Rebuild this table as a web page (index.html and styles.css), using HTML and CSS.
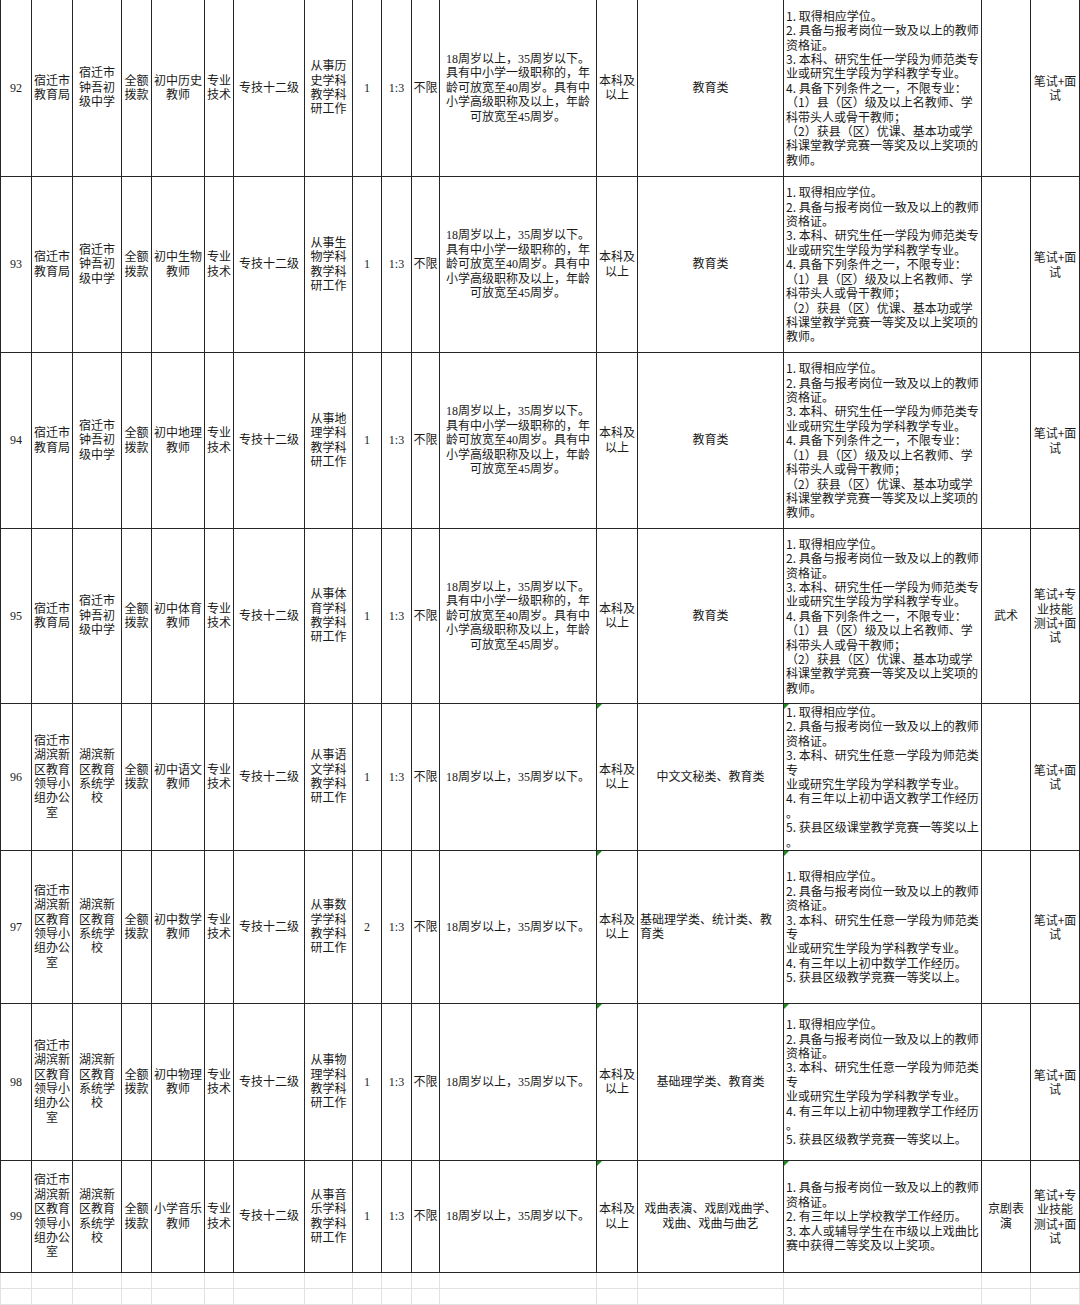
FILE: index.html
```html
<!DOCTYPE html>
<html lang="zh-CN">
<head>
<meta charset="utf-8">
<title>岗位表</title>
<link rel="stylesheet" href="styles.css">
</head>
<body>
<div class="sheet">

  <div class="row r92">
    <div class="c">92</div>
    <div class="c">宿迁市<br>教育局</div>
    <div class="c">宿迁市<br>钟吾初<br>级中学</div>
    <div class="c">全额<br>拨款</div>
    <div class="c">初中历史<br>教师</div>
    <div class="c">专业<br>技术</div>
    <div class="c">专技十二级</div>
    <div class="c">从事历<br>史学科<br>教学科<br>研工作</div>
    <div class="c">1</div>
    <div class="c">1:3</div>
    <div class="c">不限</div>
    <div class="c">18周岁以上，35周岁以下。<br>具有中小学一级职称的，年<br>龄可放宽至40周岁。具有中<br>小学高级职称及以上，年龄<br>可放宽至45周岁。</div>
    <div class="c">本科及<br>以上</div>
    <div class="c">教育类</div>
    <div class="c l sans">1. 取得相应学位。<br>2. 具备与报考岗位一致及以上的教师<br>资格证。<br>3. 本科、研究生任一学段为师范类专<br>业或研究生学段为学科教学专业。<br>4. 具备下列条件之一，不限专业：<br>（1）县（区）级及以上名教师、学<br>科带头人或骨干教师；<br>（2）获县（区）优课、基本功或学<br>科课堂教学竞赛一等奖及以上奖项的<br>教师。</div>
    <div class="c"></div>
    <div class="c sans">笔试+面<br>试</div>
  </div>

  <div class="row r93">
    <div class="c">93</div>
    <div class="c">宿迁市<br>教育局</div>
    <div class="c">宿迁市<br>钟吾初<br>级中学</div>
    <div class="c">全额<br>拨款</div>
    <div class="c">初中生物<br>教师</div>
    <div class="c">专业<br>技术</div>
    <div class="c">专技十二级</div>
    <div class="c">从事生<br>物学科<br>教学科<br>研工作</div>
    <div class="c">1</div>
    <div class="c">1:3</div>
    <div class="c">不限</div>
    <div class="c">18周岁以上，35周岁以下。<br>具有中小学一级职称的，年<br>龄可放宽至40周岁。具有中<br>小学高级职称及以上，年龄<br>可放宽至45周岁。</div>
    <div class="c">本科及<br>以上</div>
    <div class="c">教育类</div>
    <div class="c l sans">1. 取得相应学位。<br>2. 具备与报考岗位一致及以上的教师<br>资格证。<br>3. 本科、研究生任一学段为师范类专<br>业或研究生学段为学科教学专业。<br>4. 具备下列条件之一，不限专业：<br>（1）县（区）级及以上名教师、学<br>科带头人或骨干教师；<br>（2）获县（区）优课、基本功或学<br>科课堂教学竞赛一等奖及以上奖项的<br>教师。</div>
    <div class="c"></div>
    <div class="c sans">笔试+面<br>试</div>
  </div>

  <div class="row r94">
    <div class="c">94</div>
    <div class="c">宿迁市<br>教育局</div>
    <div class="c">宿迁市<br>钟吾初<br>级中学</div>
    <div class="c">全额<br>拨款</div>
    <div class="c">初中地理<br>教师</div>
    <div class="c">专业<br>技术</div>
    <div class="c">专技十二级</div>
    <div class="c">从事地<br>理学科<br>教学科<br>研工作</div>
    <div class="c">1</div>
    <div class="c">1:3</div>
    <div class="c">不限</div>
    <div class="c">18周岁以上，35周岁以下。<br>具有中小学一级职称的，年<br>龄可放宽至40周岁。具有中<br>小学高级职称及以上，年龄<br>可放宽至45周岁。</div>
    <div class="c">本科及<br>以上</div>
    <div class="c">教育类</div>
    <div class="c l sans">1. 取得相应学位。<br>2. 具备与报考岗位一致及以上的教师<br>资格证。<br>3. 本科、研究生任一学段为师范类专<br>业或研究生学段为学科教学专业。<br>4. 具备下列条件之一，不限专业：<br>（1）县（区）级及以上名教师、学<br>科带头人或骨干教师；<br>（2）获县（区）优课、基本功或学<br>科课堂教学竞赛一等奖及以上奖项的<br>教师。</div>
    <div class="c"></div>
    <div class="c sans">笔试+面<br>试</div>
  </div>

  <div class="row r95">
    <div class="c">95</div>
    <div class="c">宿迁市<br>教育局</div>
    <div class="c">宿迁市<br>钟吾初<br>级中学</div>
    <div class="c">全额<br>拨款</div>
    <div class="c">初中体育<br>教师</div>
    <div class="c">专业<br>技术</div>
    <div class="c">专技十二级</div>
    <div class="c">从事体<br>育学科<br>教学科<br>研工作</div>
    <div class="c">1</div>
    <div class="c">1:3</div>
    <div class="c">不限</div>
    <div class="c">18周岁以上，35周岁以下。<br>具有中小学一级职称的，年<br>龄可放宽至40周岁。具有中<br>小学高级职称及以上，年龄<br>可放宽至45周岁。</div>
    <div class="c">本科及<br>以上</div>
    <div class="c">教育类</div>
    <div class="c l sans">1. 取得相应学位。<br>2. 具备与报考岗位一致及以上的教师<br>资格证。<br>3. 本科、研究生任一学段为师范类专<br>业或研究生学段为学科教学专业。<br>4. 具备下列条件之一，不限专业：<br>（1）县（区）级及以上名教师、学<br>科带头人或骨干教师；<br>（2）获县（区）优课、基本功或学<br>科课堂教学竞赛一等奖及以上奖项的<br>教师。</div>
    <div class="c">武术</div>
    <div class="c sans">笔试+专<br>业技能<br>测试+面<br>试</div>
  </div>

  <div class="row r96">
    <div class="c">96</div>
    <div class="c">宿迁市<br>湖滨新<br>区教育<br>领导小<br>组办公<br>室</div>
    <div class="c">湖滨新<br>区教育<br>系统学<br>校</div>
    <div class="c">全额<br>拨款</div>
    <div class="c">初中语文<br>教师</div>
    <div class="c">专业<br>技术</div>
    <div class="c">专技十二级</div>
    <div class="c">从事语<br>文学科<br>教学科<br>研工作</div>
    <div class="c">1</div>
    <div class="c">1:3</div>
    <div class="c">不限</div>
    <div class="c">18周岁以上，35周岁以下。</div>
    <div class="c tri">本科及<br>以上</div>
    <div class="c">中文文秘类、教育类</div>
    <div class="c l sans tri">1. 取得相应学位。<br>2. 具备与报考岗位一致及以上的教师<br>资格证。<br>3. 本科、研究生任意一学段为师范类<br>专<br>业或研究生学段为学科教学专业。<br>4. 有三年以上初中语文教学工作经历<br>。<br>5. 获县区级课堂教学竞赛一等奖以上<br>。</div>
    <div class="c"></div>
    <div class="c sans">笔试+面<br>试</div>
  </div>

  <div class="row r97">
    <div class="c">97</div>
    <div class="c">宿迁市<br>湖滨新<br>区教育<br>领导小<br>组办公<br>室</div>
    <div class="c">湖滨新<br>区教育<br>系统学<br>校</div>
    <div class="c">全额<br>拨款</div>
    <div class="c">初中数学<br>教师</div>
    <div class="c">专业<br>技术</div>
    <div class="c">专技十二级</div>
    <div class="c">从事数<br>学学科<br>教学科<br>研工作</div>
    <div class="c">2</div>
    <div class="c">1:3</div>
    <div class="c">不限</div>
    <div class="c">18周岁以上，35周岁以下。</div>
    <div class="c tri">本科及<br>以上</div>
    <div class="c l">基础理学类、统计类、教<br>育类</div>
    <div class="c l sans tri">1. 取得相应学位。<br>2. 具备与报考岗位一致及以上的教师<br>资格证。<br>3. 本科、研究生任意一学段为师范类<br>专<br>业或研究生学段为学科教学专业。<br>4. 有三年以上初中数学工作经历。<br>5. 获县区级教学竞赛一等奖以上。</div>
    <div class="c"></div>
    <div class="c sans">笔试+面<br>试</div>
  </div>

  <div class="row r98">
    <div class="c">98</div>
    <div class="c">宿迁市<br>湖滨新<br>区教育<br>领导小<br>组办公<br>室</div>
    <div class="c">湖滨新<br>区教育<br>系统学<br>校</div>
    <div class="c">全额<br>拨款</div>
    <div class="c">初中物理<br>教师</div>
    <div class="c">专业<br>技术</div>
    <div class="c">专技十二级</div>
    <div class="c">从事物<br>理学科<br>教学科<br>研工作</div>
    <div class="c">1</div>
    <div class="c">1:3</div>
    <div class="c">不限</div>
    <div class="c">18周岁以上，35周岁以下。</div>
    <div class="c tri">本科及<br>以上</div>
    <div class="c">基础理学类、教育类</div>
    <div class="c l sans tri">1. 取得相应学位。<br>2. 具备与报考岗位一致及以上的教师<br>资格证。<br>3. 本科、研究生任意一学段为师范类<br>专<br>业或研究生学段为学科教学专业。<br>4. 有三年以上初中物理教学工作经历<br>。<br>5. 获县区级教学竞赛一等奖以上。</div>
    <div class="c"></div>
    <div class="c sans">笔试+面<br>试</div>
  </div>

  <div class="row r99">
    <div class="c">99</div>
    <div class="c">宿迁市<br>湖滨新<br>区教育<br>领导小<br>组办公<br>室</div>
    <div class="c">湖滨新<br>区教育<br>系统学<br>校</div>
    <div class="c">全额<br>拨款</div>
    <div class="c">小学音乐<br>教师</div>
    <div class="c">专业<br>技术</div>
    <div class="c">专技十二级</div>
    <div class="c">从事音<br>乐学科<br>教学科<br>研工作</div>
    <div class="c">1</div>
    <div class="c">1:3</div>
    <div class="c">不限</div>
    <div class="c">18周岁以上，35周岁以下。</div>
    <div class="c tri">本科及<br>以上</div>
    <div class="c">戏曲表演、戏剧戏曲学、<br>戏曲、戏曲与曲艺</div>
    <div class="c l sans tri">1. 具备与报考岗位一致及以上的教师<br>资格证。<br>2. 有三年以上学校教学工作经历。<br>3. 本人或辅导学生在市级以上戏曲比<br>赛中获得二等奖及以上奖项。</div>
    <div class="c">京剧表<br>演</div>
    <div class="c sans">笔试+专<br>业技能<br>测试+面<br>试</div>
  </div>

  <div class="row blank">
    <div class="c"></div><div class="c"></div><div class="c"></div><div class="c"></div><div class="c"></div><div class="c"></div><div class="c"></div><div class="c"></div><div class="c"></div><div class="c"></div><div class="c"></div><div class="c"></div><div class="c"></div><div class="c"></div><div class="c"></div><div class="c"></div><div class="c"></div>
  </div>
  <div class="row blank">
    <div class="c"></div><div class="c"></div><div class="c"></div><div class="c"></div><div class="c"></div><div class="c"></div><div class="c"></div><div class="c"></div><div class="c"></div><div class="c"></div><div class="c"></div><div class="c"></div><div class="c"></div><div class="c"></div><div class="c"></div><div class="c"></div><div class="c"></div>
  </div>

</div>
</body>
</html>
```

FILE: styles.css
```css
html, body {
  margin: 0;
  padding: 0;
  background: #ffffff;
}

.sheet {
  width: 1080px;
  display: flex;
  flex-direction: column;
  font-family: "Liberation Serif", "Noto Sans CJK SC", serif;
  font-size: 12px;
  line-height: 14.4px;
  color: #1a1a1a;
}

.row {
  display: grid;
  grid-template-columns: 32px 41px 49px 30px 53px 29px 71px 48px 29px 30px 28px 157px 41px 146px 198px 49px 49px;
}

.r92 { height: 177px; }
.r93 { height: 176px; }
.r94 { height: 176px; }
.r95 { height: 175px; }
.r96 { height: 147px; }
.r97 { height: 153px; }
.r98 { height: 157px; }
.r99 { height: 112px; }
.blank { height: 16px; }

.c {
  position: relative;
  box-sizing: border-box;
  display: flex;
  align-items: center;
  justify-content: center;
  text-align: center;
  white-space: nowrap;
  overflow: hidden;
  border-right: 1px solid #262626;
  border-bottom: 1px solid #262626;
  padding: 0 1px;
}

.row > .c:first-child {
  border-left: 1px solid #262626;
}

.l {
  justify-content: flex-start;
  text-align: left;
  padding-left: 2px;
}

.sans {
  font-family: "Noto Sans CJK SC", sans-serif;
}

.tri::before {
  content: "";
  position: absolute;
  left: 0;
  top: 0;
  border-top: 5px solid #1f8a1f;
  border-right: 5px solid transparent;
}

.blank .c {
  border-right-color: #e2e2e2;
  border-bottom-color: #e2e2e2;
}

.blank > .c:first-child {
  border-left-color: #e2e2e2;
}
```
